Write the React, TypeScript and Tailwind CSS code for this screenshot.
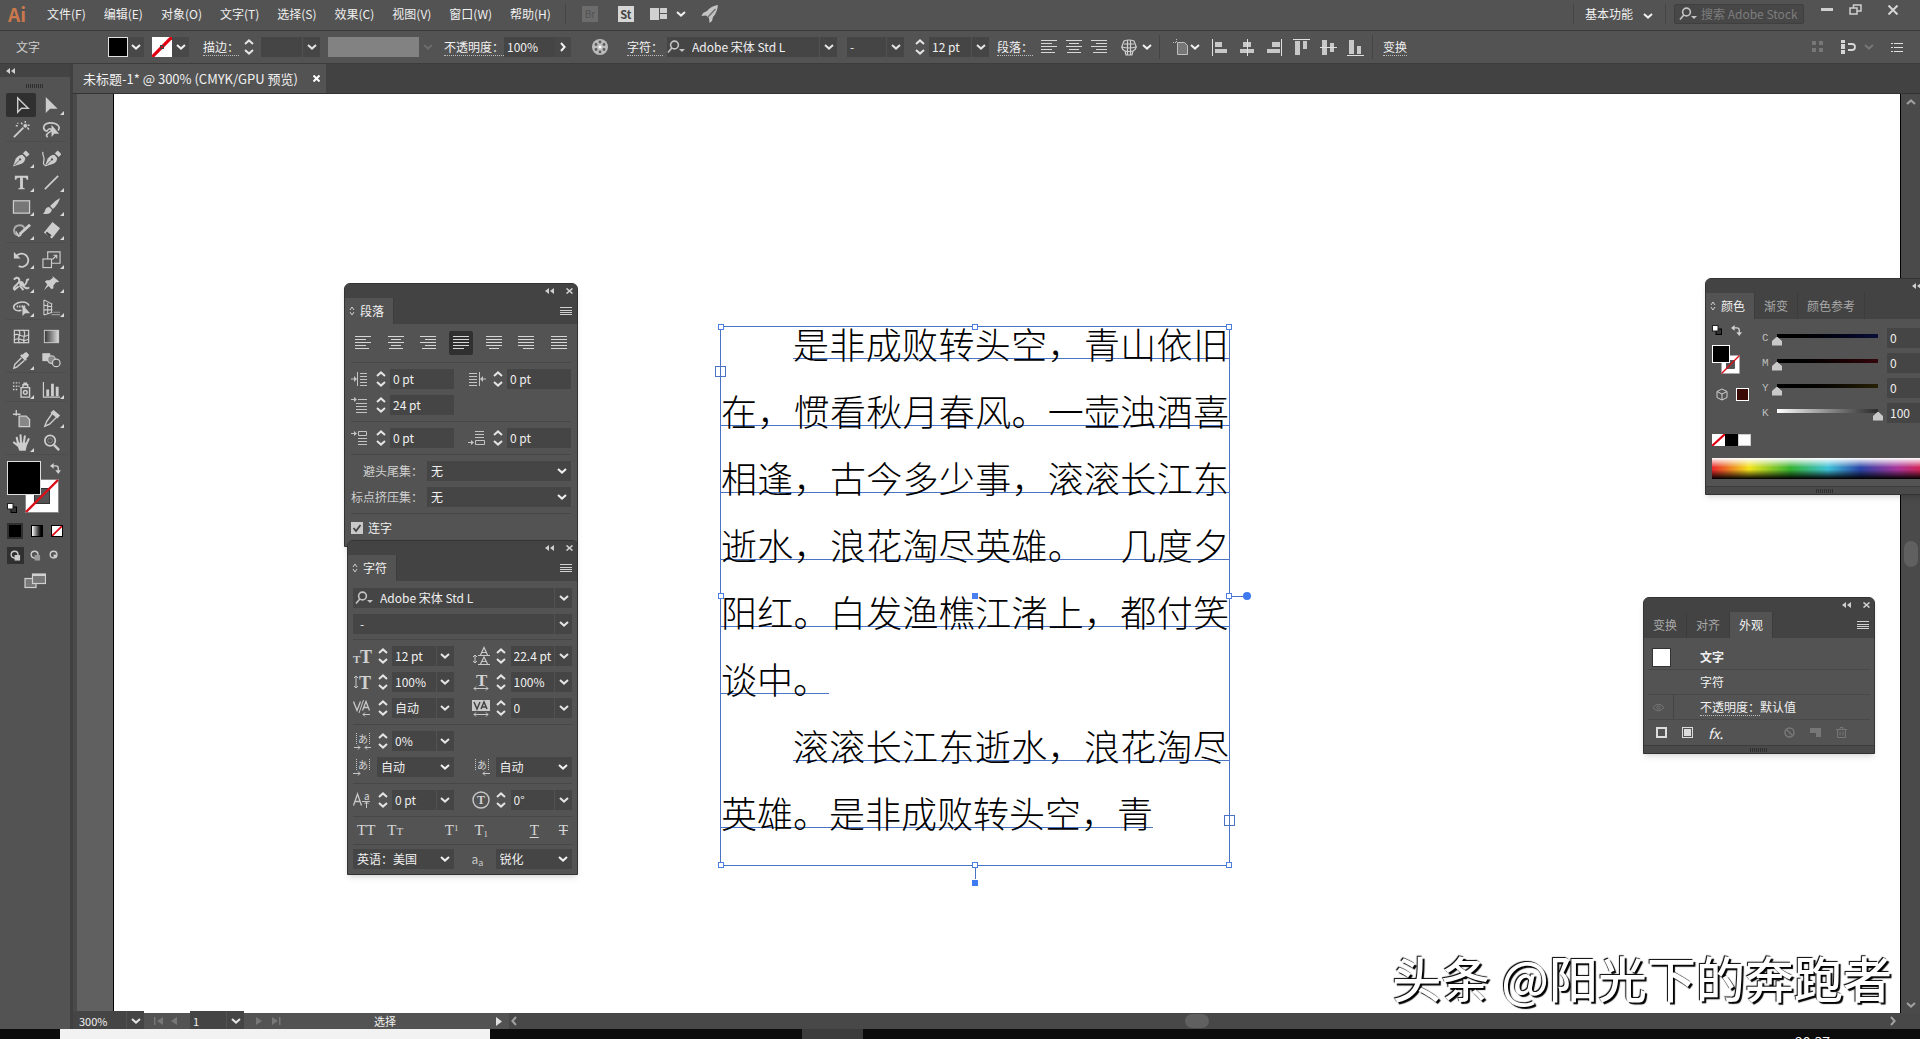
import { ReactNode, useState } from 'react';
import clsx from 'clsx';

const MENUS = ['文件(F)', '编辑(E)', '对象(O)', '文字(T)', '选择(S)', '效果(C)', '视图(V)', '窗口(W)', '帮助(H)'];

const POEM = [
  { text: '是非成败转头空，青山依旧', indent: true, full: true },
  { text: '在，惯看秋月春风。一壶浊酒喜', indent: false, full: true },
  { text: '相逢，古今多少事，滚滚长江东', indent: false, full: true },
  { text: '逝水，浪花淘尽英雄。　几度夕', indent: false, full: true },
  { text: '阳红。白发渔樵江渚上，都付笑', indent: false, full: true },
  { text: '谈中。', indent: false, full: false },
  { text: '滚滚长江东逝水，浪花淘尽', indent: true, full: true },
  { text: '英雄。是非成败转头空，青', indent: false, full: false },
];

/* ---------- small glyphs ---------- */

function Chevron({ className }: { className?: string }) {
  return (
    <svg viewBox="0 0 10 6" className={clsx('h-[6px] w-[10px] shrink-0', className)} fill="none" stroke="currentColor" strokeWidth="2">
      <path d="M1 1l4 3.6L9 1" />
    </svg>
  );
}

function Stepper({ label }: { label: string }) {
  return (
    <span className="flex w-[11px] shrink-0 flex-col items-center gap-1 text-[#e4e4e4]">
      <button aria-label={`${label} +`} className="flex">
        <Chevron className="rotate-180" />
      </button>
      <button aria-label={`${label} -`} className="flex">
        <Chevron />
      </button>
    </span>
  );
}

type LineKind = 'left' | 'center' | 'right' | 'jleft' | 'jcenter' | 'jright' | 'full';

const LINE_SETS: Record<LineKind, [number, number][]> = {
  left: [[0, 16], [0, 11], [0, 16], [0, 11], [0, 14]],
  center: [[0, 16], [3, 13], [0, 16], [3, 13], [1, 15]],
  right: [[0, 16], [5, 16], [0, 16], [5, 16], [2, 16]],
  jleft: [[0, 16], [0, 16], [0, 16], [0, 16], [0, 11]],
  jcenter: [[0, 16], [0, 16], [0, 16], [0, 16], [3, 13]],
  jright: [[0, 16], [0, 16], [0, 16], [0, 16], [5, 16]],
  full: [[0, 16], [0, 16], [0, 16], [0, 16], [0, 16]],
};

function Lines({ kind }: { kind: LineKind }) {
  return (
    <svg viewBox="0 0 16 14" className="h-[14px] w-[16px]" stroke="#d6d6d6" strokeWidth="1" shapeRendering="crispEdges">
      {LINE_SETS[kind].map(([a, b], i) => (
        <path key={i} d={`M${a} ${i * 3 + 0.5}H${b}`} />
      ))}
    </svg>
  );
}

function Search() {
  return (
    <svg viewBox="0 0 18 14" className="h-[14px] w-[18px] shrink-0" fill="none" stroke="#c4c4c4" strokeWidth="1.6">
      <circle cx="7.5" cy="5" r="3.9" />
      <path d="M4.8 8L1 12.5" />
      <path d="M12 9h6l-3 3z" fill="#c4c4c4" stroke="none" />
    </svg>
  );
}

function Swap() {
  return (
    <svg viewBox="0 0 12 12" className="h-[11px] w-[11px]" fill="none" stroke="#cfcfcf" strokeWidth="1.5">
      <path d="M3 3.2h3.5q2.5 0 2.5 2.5V9" />
      <path d="M4 0v6.4L0 3.2zM5.8 8h6.2L9 12z" fill="#cfcfcf" stroke="none" />
    </svg>
  );
}

function DefaultColors() {
  return (
    <svg viewBox="0 0 10 10" className="h-[10px] w-[10px]">
      <rect x="4" y="4" width="5.5" height="5.5" fill="#333" stroke="#000" />
      <rect x="0.5" y="0.5" width="5.5" height="5.5" fill="#fff" stroke="#222" />
    </svg>
  );
}

function NoneBox({ className }: { className?: string }) {
  return (
    <svg viewBox="0 0 12 12" preserveAspectRatio="none" className={clsx('block', className)}>
      <rect width="12" height="12" fill="#fff" />
      <path d="M0 12L12 0" stroke="#e00012" strokeWidth="2" />
    </svg>
  );
}

function StrokeBox({ className }: { className?: string }) {
  return (
    <svg viewBox="0 0 34 34" className={clsx('block', className)}>
      <rect x="0.5" y="0.5" width="33" height="33" fill="#fff" stroke="#888" />
      <rect x="9.5" y="9.5" width="15" height="15" fill="#535353" stroke="#333" />
      <path d="M1 33L33 1" stroke="#d8101c" strokeWidth="2.4" />
    </svg>
  );
}

function Grip() {
  return (
    <svg viewBox="0 0 20 4" className="h-1 w-5" stroke="#2e2e2e" shapeRendering="crispEdges">
      {[0, 1, 2, 3, 4, 5, 6, 7, 8].map((i) => (
        <path key={i} d={`M${i * 2 + 1.5} 0V4`} />
      ))}
    </svg>
  );
}

/* ---------- form parts ---------- */

function Combo({ label, value, className, arrow = true }: { label: string; value: string; className?: string; arrow?: boolean }) {
  return (
    <span className={clsx('flex h-5 items-stretch bg-[#454545]', className)}>
      <input aria-label={label} defaultValue={value} className="w-0 min-w-0 flex-1 bg-transparent pl-[3px] text-[#f0f0f0] outline-none" />
      {arrow && (
        <button aria-label={`${label} ▾`} className="flex w-[18px] items-center justify-center border-l border-[#525252] text-[#e4e4e4]">
          <Chevron />
        </button>
      )}
    </span>
  );
}

function Select({ label, id, value, className }: { label: string; id?: string; value: string; className?: string }) {
  return (
    <span className={clsx('relative flex h-5 items-center bg-[#454545] text-[#f0f0f0]', className)}>
      <select id={id} aria-label={id ? undefined : label} className="h-full w-full appearance-none bg-transparent pl-1 outline-none">
        <option>{value}</option>
      </select>
      <Chevron className="pointer-events-none absolute right-1" />
    </span>
  );
}

function DottedLabel({ children }: { children: ReactNode }) {
  return <button className="shrink-0 border-b border-dotted border-[#bdbdbd] leading-[16px] whitespace-nowrap text-[#f0f0f0]">{children}</button>;
}

/* ---------- tool column ---------- */

const I = '#cdcdcd';

function Pen({ x }: { x: number }) {
  return (
    <g transform={`translate(${x} 0)`}>
      <path d="M1 18.5L4 10q3-4 7-4l3 3.5q0 4-4 6z" fill={I} />
      <path d="M11.5 4.5l3-3L18.500 5.500 15.500 8.500z" fill={I} />
      <path d="M2.5 17l5-5" stroke="#555" />
      <circle cx="8.5" cy="11" r="1.2" fill="#555" />
    </g>
  );
}

const TOOLS: { name: string; sub?: boolean; art: ReactNode }[][] = [
  [
    { name: '选择工具', art: <path d="M6 2v15l4-4.2 7 .2z" fill="none" stroke={I} strokeWidth="1.5" /> },
    { name: '直接选择工具', sub: true, art: <path d="M4 1v17l4.5-4.500 8 0z" fill={I} /> },
    {
      name: '魔棒工具',
      art: (
        <g stroke={I} fill={I}>
          <path d="M2 18L12 8" strokeWidth="2" />
          <circle cx="14" cy="6" r="1.6" />
          <path d="M14 1v2M18.5 5.500h-2M18 10l-2-2M9.500 3l1.500 1.500M4 6h2M6 3v1" strokeWidth="1.5" />
        </g>
      ),
    },
    {
      name: '套索工具',
      art: (
        <g>
          <path d="M5 12C-1 9 2 3 9 3s11 4 8 8M5 12c3-5 7-2 4 0s-6 4-3 6" fill="none" stroke={I} strokeWidth="1.7" />
          <path d="M10 5v13l3-3.5h5z" fill={I} />
        </g>
      ),
    },
  ],
  [
    { name: '钢笔工具', sub: true, art: <Pen x={0} /> },
    {
      name: '曲率工具',
      art: (
        <g>
          <Pen x={2} />
          <path d="M1 3c-1 4 2 5 1 9s0 6 3 5" fill="none" stroke={I} strokeWidth="1.3" />
        </g>
      ),
    },
    { name: '文字工具', sub: true, art: <path d="M3 3h14v4h-1.5q-.3-2-2-2h-2v10q0 1.200 2 1.200V17h-7v-.8q2 0 2-1.200V5h-2q-1.700 0-2 2H3z" fill={I} /> },
    { name: '直线段工具', sub: true, art: <path d="M3 17L17 3" stroke={I} strokeWidth="1.8" /> },
    { name: '矩形工具', sub: true, art: <rect x="1.5" y="4" width="17" height="13" fill="#777" stroke={I} strokeWidth="1.3" /> },
    {
      name: '画笔工具',
      sub: true,
      art: <path d="M19 1q-6 3-10.500 8.500l3 3Q17 8 19 1zM7.500 10.500q-3 0-4 3-.4 3-2.500 4 8 2 9.500-4z" fill={I} />,
    },
    {
      name: 'Shaper 工具',
      sub: true,
      art: (
        <g fill="none" stroke={I}>
          <path d="M9 15c-7 1-8-5-6-8s9-4 10 1" strokeWidth="2" stroke="#aaa" />
          <path d="M8 14L19 4" strokeWidth="3" />
          <path d="M4 11l3 5 3-2" strokeWidth="1.5" />
        </g>
      ),
    },
    {
      name: '橡皮擦工具',
      sub: true,
      art: (
        <g>
          <path d="M11 1l8 6.5-8.500 11L2 12z" fill={I} />
          <path d="M5 11l5 4-2 2-4-4z" fill="#444" />
        </g>
      ),
    },
  ],
  [
    {
      name: '旋转工具',
      sub: true,
      art: (
        <g>
          <path d="M5 6a7 7 0 1 1 2 11" fill="none" stroke={I} strokeWidth="1.9" />
          <path d="M2 2v7h7z" fill={I} />
        </g>
      ),
    },
    {
      name: '比例缩放工具',
      sub: true,
      art: (
        <g fill="none" stroke={I} strokeWidth="1.2">
          <rect x="1" y="9.5" width="9" height="9" />
          <path d="M6 9.500V2h13v12h-9M11 10l4.500-4.500M12 5.500h3.500V9" />
        </g>
      ),
    },
    {
      name: '宽度工具',
      sub: true,
      art: (
        <g fill="none" stroke={I} strokeWidth="2">
          <path d="M2 6c4-5 7 0 5 3s-6 4-5 7M7 9c4-3 4 5 7 2s0-6 4-5M2 17l5-4M12 17l-4-5M10 11q5 6 8 3" />
          <circle cx="10" cy="10" r="1.5" fill={I} />
        </g>
      ),
    },
    { name: '操控变形工具', sub: true, art: <path d="M11 2l7 6-2 1-1-.5-3 3.500 0 3-2 1-3-3.500L2 17l3.500-6L3 8l2-1.500 3 .2L11.500 4z" fill={I} /> },
    {
      name: '形状生成器工具',
      sub: true,
      art: (
        <g>
          <path d="M10 13C3 15 0 10 3 7s12-5 15 1" fill="none" stroke={I} strokeWidth="1.6" />
          <path d="M5 9h9" stroke={I} strokeWidth="2" strokeDasharray="1.5 1" />
          <path d="M11 7v12l3-3 5 0z" fill={I} />
        </g>
      ),
    },
    {
      name: '透视网格工具',
      sub: true,
      art: (
        <g fill="none" stroke={I} strokeWidth="1.1">
          <path d="M2 2v16M6 4v13M10 6v9M2 2l9 4.500M2 7.500l9 2M2 12.500h9M2 18l9-3" />
          <path d="M12 15h7M10 17.500h9" stroke="#999" />
        </g>
      ),
    },
  ],
  [
    {
      name: '网格工具',
      art: (
        <g fill="none" stroke={I} strokeWidth="1.3">
          <rect x="2.5" y="3.5" width="15" height="13" />
          <path d="M2 9c5-5 8 5 16-1M2 14c6-5 9 3 15-1M7 3c4 5-3 8 1 14M12 3c4 5-2 9 1 14" />
        </g>
      ),
    },
    { name: '渐变工具', art: <rect x="2.5" y="3.5" width="15" height="13" fill="url(#toolGradient)" stroke={I} /> },
    {
      name: '吸管工具',
      sub: true,
      art: (
        <g>
          <path d="M13 2l2-1 3 3-1 2-2 2 .6 1L14 10.5 8.500 5 10 3.500l1 .5z" fill={I} />
          <path d="M10 7L3 14l-1 4 3-1 8-7" fill="none" stroke={I} strokeWidth="1.5" />
        </g>
      ),
    },
    {
      name: '混合工具',
      art: (
        <g stroke={I} strokeWidth="1.3">
          <rect x="1" y="3" width="7" height="7" fill={I} />
          <circle cx="10" cy="9" r="4" fill="#888" />
          <circle cx="15" cy="12.5" r="4" fill="#535353" />
        </g>
      ),
    },
  ],
  [
    {
      name: '符号喷枪工具',
      sub: true,
      art: (
        <g fill="none" stroke={I} strokeWidth="1.5">
          <path d="M9.500 8h9v10h-9zM11.500 8V5h5v3M12 3.500h4" />
          <circle cx="14" cy="13" r="2" />
          <path d="M1 3h7M1 6.500h7M1 10h5" strokeDasharray="1.6 1.4" />
        </g>
      ),
    },
    {
      name: '柱形图工具',
      sub: true,
      art: (
        <g>
          <path d="M1.500 2v16H19" fill="none" stroke={I} strokeWidth="1.3" />
          <path d="M4.500 10h3v7h-3zM9.500 4h3v13h-3zM14.500 7h3v10h-3z" fill={I} />
        </g>
      ),
    },
  ],
  [
    {
      name: '画板工具',
      art: (
        <g stroke={I} strokeWidth="1.4">
          <path d="M7.500 7.500H15l3.500 3.500v7.500h-11z" fill="#888" />
          <path d="M1 5.500h8M4.500 1v6" fill="none" />
        </g>
      ),
    },
    {
      name: '切片工具',
      sub: true,
      art: (
        <g fill="none" stroke={I} strokeWidth="1.5">
          <path d="M12 3l5 4L8 16l-5 2 2-5z" />
          <path d="M12 2l6 5-2 2-6-5z" fill={I} />
        </g>
      ),
    },
    {
      name: '抓手工具',
      sub: true,
      art: (
        <g stroke={I} strokeWidth="2.2" strokeLinecap="round" fill="none">
          <path d="M6.500 11L5 5M9.500 10L9 2.500M12.500 10L13.500 3.500M15 12l2.500-5.500M6 13l-4-3" />
          <path d="M6 11h9l-1.500 6.500h-5z" fill={I} />
        </g>
      ),
    },
    {
      name: '缩放工具',
      art: (
        <g fill="none" stroke={I}>
          <circle cx="8.5" cy="8" r="5.5" strokeWidth="1.8" />
          <circle cx="8.5" cy="8" r="2.5" stroke="#888" />
          <path d="M12.500 12.500L18 18" strokeWidth="2.6" />
        </g>
      ),
    },
  ],
];

function ToolColumn() {
  return (
    <aside className="flex w-[73px] shrink-0 flex-col border-r-[3px] border-[#404040] bg-[#535353]">
      <div className="flex h-[13px] shrink-0 items-center bg-[#434343] pl-[6px]">
        <Collapse />
      </div>
      <div className="flex h-4 items-center justify-center pt-px">
        <Grip />
      </div>
      <svg className="h-0 w-0" aria-hidden="true">
        <defs>
          <linearGradient id="toolGradient">
            <stop offset="0" stopColor="#333" />
            <stop offset="1" stopColor="#ddd" />
          </linearGradient>
        </defs>
      </svg>
      <div className="flex flex-col gap-1 pr-1 pl-[6px]">
        {TOOLS.map((group, g) => (
          <div key={g} className="grid grid-cols-2 border-b border-[#4c4c4c]">
            {group.map((tool, i) => (
              <button
                key={tool.name}
                aria-label={tool.name}
                className={clsx('relative flex h-6 items-center justify-center', g === 0 && i === 0 && 'rounded-xs bg-[#303030]')}
              >
                <svg viewBox="0 0 20 20" className="h-[19px] w-[19px]">
                  {tool.art}
                </svg>
                {tool.sub && (
                  <svg viewBox="0 0 4 4" className="absolute right-[2px] bottom-[2px] h-1 w-1">
                    <path d="M4 0v4H0z" fill="#d8d8d8" />
                  </svg>
                )}
              </button>
            ))}
          </div>
        ))}
      </div>
      <div className="relative mx-[7px] mt-[6px] h-[54px]">
        <button aria-label="描边" className="absolute top-[18px] left-[18px]">
          <StrokeBox className="h-[34px] w-[34px]" />
        </button>
        <button aria-label="填色" className="absolute top-0 left-0 h-[34px] w-[34px] border border-[#ddd] bg-black" />
        <button aria-label="互换填色和描边" className="absolute top-[2px] right-[2px]">
          <Swap />
        </button>
        <button aria-label="默认填色和描边" className="absolute bottom-[2px] left-0">
          <DefaultColors />
        </button>
      </div>
      <div className="mx-[7px] mt-2 flex h-4 items-center justify-between">
        <button aria-label="颜色" className="flex h-4 w-4 items-center justify-center bg-[#303030]">
          <span className="h-3 w-3 bg-black" />
        </button>
        <button aria-label="渐变" className="h-3 w-3 border border-black bg-linear-to-r from-white to-black" />
        <button aria-label="无">
          <NoneBox className="h-3 w-3 border border-black" />
        </button>
      </div>
      <div className="mx-[7px] mt-2 flex h-[17px] items-center justify-between">
        {['正常绘图', '背面绘图', '内部绘图'].map((name, i) => (
          <button key={name} aria-label={name} className={clsx('flex h-[17px] w-[17px] items-center justify-center', i === 0 && 'bg-[#303030]')}>
            <svg viewBox="0 0 12 12" className="h-[11px] w-[11px]">
              <circle cx="5" cy="5" r="3.7" fill="none" stroke={I} strokeWidth="1.5" />
              {i < 2 ? <rect x="5" y="5.5" width="6" height="6" fill={i === 0 ? I : '#9a9a9a'} /> : <path d="M5 5h3.500v3.500H5z" fill={I} />}
            </svg>
          </button>
        ))}
      </div>
      <button aria-label="更改屏幕模式" className="mt-[9px] self-center">
        <svg viewBox="0 0 22 16" className="h-4 w-[22px]" stroke="#d0d0d0" strokeWidth="1.2">
          <rect x="1" y="5.5" width="11" height="9" fill="#777" />
          <rect x="8.5" y="1" width="13" height="9.5" fill="#777" />
          <path d="M9 2h12" strokeWidth="2" />
        </svg>
      </button>
    </aside>
  );
}

/* ---------- top bars ---------- */

function Divider({ className }: { className?: string }) {
  return <span className={clsx('w-px shrink-0 bg-[#454545]', className)} />;
}

function MenuBar() {
  return (
    <header className="flex h-[31px] shrink-0 items-center border-b border-[#3c3c3c] bg-[#535353] pb-[2px] pl-2 text-[#f0f0f0]">
      <span className="w-[39px] text-[19px] leading-[20px] font-bold text-[#c9794d]">Ai</span>
      <nav className="flex gap-[18px] whitespace-nowrap">
        {MENUS.map((m) => (
          <button key={m}>{m}</button>
        ))}
      </nav>
      <Divider className="mr-4 ml-[14px] h-5" />
      <button className="mr-5 h-4 w-4 bg-[#6c6c6c] text-[10px] leading-[16px] text-[#525252]">Br</button>
      <button className="mr-4 h-4 w-4 bg-[#d6d6d6] text-[11px] leading-[16px] font-bold text-[#444]">St</button>
      <button aria-label="排列文档" className="flex items-center gap-2">
        <svg viewBox="0 0 18 12" className="h-3 w-[18px]" fill="#d0d0d0">
          <path d="M0 0h9v12H0zM10 0h7v5h-7zM10 6h7v5h-7z" />
        </svg>
        <Chevron />
      </button>
      <button aria-label="GPU 性能" className="ml-[15px]">
        <svg viewBox="0 0 18 18" className="h-[18px] w-[18px]" fill="#c4c4c4">
          <path d="M17 0Q10 1 6 6L2 8l-1.500 3 4.500-.5 3 2.500.5 5 2.500-2 1-4Q16 8 17 0z" />
          <path d="M14.500 4L7 12" stroke="#6a6a6a" strokeWidth="1.2" />
        </svg>
      </button>
      <div className="ml-auto flex items-center">
        <Divider className="mr-[11px] h-5" />
        <button className="flex items-center gap-[10px]">
          基本功能
          <Chevron className="mt-1" />
        </button>
        <Divider className="mr-2 ml-3 h-5" />
        <label className="flex h-5 w-[130px] items-center gap-1 rounded-xs border border-[#3f3f3f] bg-[#474747] pl-1">
          <Search />
          <input aria-label="搜索" placeholder="搜索 Adobe Stock" className="w-0 flex-1 bg-transparent text-[12px] outline-none placeholder:text-[#7d7d7d]" />
        </label>
        <span className="flex items-center self-start pr-[21px] pl-[17px]">
          <button aria-label="最小化" className="h-[3px] w-3 bg-[#cfcfcf]" />
          <button aria-label="还原" className="ml-4">
            <svg viewBox="0 0 13 11" className="h-[11px] w-[13px]" fill="none" stroke="#cfcfcf" strokeWidth="1.5">
              <path d="M1 4h7v6H1zM4.500 4V1H12v6H8" />
            </svg>
          </button>
          <button aria-label="关闭" className="ml-[25px]">
            <svg viewBox="0 0 12 10" className="h-[10px] w-3" stroke="#d6d6d6" strokeWidth="2">
              <path d="M1.500.5l9 9M10.500.5l-9 9" />
            </svg>
          </button>
        </span>
      </div>
    </header>
  );
}

const ALIGN_ART: { name: string; d: string; line: string }[] = [
  { name: '水平左对齐', d: 'M3 3h7v5H3zM3 10h12v4H3z', line: 'M.5 0v17' },
  { name: '水平居中对齐', d: 'M4 3h8v5H4zM1 10h14v4H1z', line: 'M8 0v17' },
  { name: '水平右对齐', d: 'M6 3h8v5H6zM1 10h13v4H1z', line: 'M15.5 0v17' },
  { name: '垂直顶对齐', d: 'M2 2h5v14H2zM10 2h4v8h-4z', line: 'M0 .5h17' },
  { name: '垂直居中对齐', d: 'M2 1h5v15H2zM10 4h4v9h-4z', line: 'M0 8.5h17' },
  { name: '垂直底对齐', d: 'M2 1h5v14H2zM10 7h4v8h-4z', line: 'M0 16.5h17' },
];

function ControlBar() {
  return (
    <div className="flex h-[33px] shrink-0 items-center border-b border-[#3c3c3c] bg-[#535353] text-[#f0f0f0]">
      <span className="w-[108px] shrink-0 pl-4 text-[#cfcfcf]">文字</span>
      <button aria-label="填色" className="h-5 w-5 shrink-0 border border-[#e0e0e0] bg-black" />
      <button aria-label="填色 ▾" className="mr-2 flex h-5 w-4 items-center justify-center bg-[#484848]">
        <Chevron />
      </button>
      <button aria-label="描边颜色" className="relative shrink-0">
        <NoneBox className="h-5 w-5" />
        <span className="absolute top-[8px] left-[8px] h-1 w-1 border border-[#444]" />
      </button>
      <button aria-label="描边颜色 ▾" className="mr-[14px] flex h-5 w-[17px] items-center justify-center bg-[#484848]">
        <Chevron />
      </button>
      <DottedLabel>描边：</DottedLabel>
      <span className="w-1" />
      <Stepper label="描边" />
      <Combo label="描边粗细" value="" className="mr-2 ml-[7px] w-[59px]" />
      <button aria-label="画笔定义" className="h-5 w-[91px] shrink-0 bg-[#828282]" />
      <Chevron className="mr-[11px] ml-1 text-[#6c6c6c]" />
      <DottedLabel>不透明度：</DottedLabel>
      <Combo label="不透明度" value="100%" arrow={false} className="w-[51px]" />
      <button aria-label="不透明度 ▾" className="mr-[20px] flex h-5 w-4 items-center justify-center bg-[#484848]">
        <Chevron className="-rotate-90" />
      </button>
      <button aria-label="重新着色图稿" className="mr-[18px]">
        <svg viewBox="0 0 18 18" className="h-[18px] w-[18px]">
          <circle cx="9" cy="9" r="8" fill="#bcbcbc" />
          <g fill="#5c5c5c">
            <circle cx="9" cy="4" r="1.4" />
            <circle cx="13" cy="6.5" r="1.4" />
            <circle cx="13" cy="11.5" r="1.4" />
            <circle cx="9" cy="14" r="1.4" />
            <circle cx="5" cy="11.5" r="1.4" />
            <circle cx="5" cy="6.5" r="1.4" />
          </g>
          <circle cx="9" cy="9" r="1.5" fill="#fff" />
        </svg>
      </button>
      <DottedLabel>字符：</DottedLabel>
      <span className="ml-1 flex h-5 w-[170px] items-center bg-[#454545]">
        <Search />
        <Combo label="字体" value="Adobe 宋体 Std L" className="ml-1 flex-1" />
      </span>
      <Combo label="字体样式" value="-" className="mx-[10px] w-[57px]" />
      <Stepper label="字号" />
      <Combo label="字号" value="12 pt" className="mr-2 ml-1 w-[60px]" />
      <DottedLabel>段落：</DottedLabel>
      <span className="ml-2 flex gap-[9px]">
        <button aria-label="左对齐">
          <Lines kind="left" />
        </button>
        <button aria-label="居中对齐">
          <Lines kind="center" />
        </button>
        <button aria-label="右对齐">
          <Lines kind="right" />
        </button>
      </span>
      <button aria-label="制作封套" className="ml-[14px] flex items-center gap-[5px]">
        <svg viewBox="0 0 16 17" className="h-[17px] w-4" fill="none" stroke="#d0d0d0" strokeWidth="1.2">
          <path d="M3 2q5-2 10 0l2.300 6q-1 3-3.300 4l-1 4H5l-1-4Q1.500 11 .7 8zM1 8q7 2 14 0M4 12q4 1 8 0M6.500 1.500v14M9.500 1.500v14M3 5h10" />
        </svg>
        <Chevron />
      </button>
      <Divider className="mr-[13px] ml-[7px] h-6" />
      <button aria-label="对齐画板" className="mr-3 flex items-center">
        <svg viewBox="0 0 17 17" className="h-[17px] w-[17px]" fill="#777" stroke="#c0c0c0">
          <path d="M4.500 3.500h7l3 3v9h-10z" />
          <path d="M0 3.500h4M3.500 0v3" strokeDasharray="1 1" />
        </svg>
        <Chevron className="h-[5px] w-[7px]" />
      </button>
      <span className="flex gap-[10px]">
        {ALIGN_ART.map((a) => (
          <button key={a.name} aria-label={a.name}>
            <svg viewBox="0 0 17 17" className="h-[17px] w-[17px]" shapeRendering="crispEdges">
              <path d={a.d} fill="#c8c8c8" />
              <path d={a.line} stroke="#e0e0e0" />
            </svg>
          </button>
        ))}
      </span>
      <Divider className="mr-[10px] ml-2 h-6" />
      <DottedLabel>变换</DottedLabel>
      <div className="mr-[17px] ml-auto flex items-center">
        <svg viewBox="0 0 12 12" className="mr-[17px] h-3 w-3" fill="#777">
          <path d="M0 0h4v4H0zM7 0h4v4H7zM0 7h4v4H0zM7 7h4v4H7z" />
        </svg>
        <button aria-label="选择类似的对象" className="mr-2 flex">
          <svg viewBox="0 0 15 14" className="h-[14px] w-[15px]" fill="#d6d6d6">
            <path d="M0 0h4v3H0zM0 4h4v5H0zM0 10h4v4H0z" />
            <path d="M7 4h4q3 0 3 3t-3 3H7" fill="none" stroke="#d6d6d6" strokeWidth="1.8" />
          </svg>
        </button>
        <Chevron className="mr-[17px] h-[5px] w-2 text-[#777]" />
        <button aria-label="控制面板菜单">
          <svg viewBox="0 0 12 10" className="h-[10px] w-3" stroke="#e0e0e0" shapeRendering="crispEdges">
            <path d="M0 1.500h2M0 5.500h2M0 9.500h2M3 1.500h9M3 5.500h9M3 9.500h9" />
          </svg>
        </button>
      </div>
    </div>
  );
}

/* ---------- floating panels ---------- */

function Collapse() {
  return (
    <svg viewBox="0 0 9 6" className="h-[6px] w-[9px]" fill="#cfcfcf">
      <path d="M4 0v6L0 3zM9 0v6L5 3z" />
    </svg>
  );
}

function Panel({ tabs, active, handle = true, className, children }: { tabs: string[]; active: number; handle?: boolean; className: string; children: ReactNode }) {
  return (
    <section className={clsx('absolute flex flex-col overflow-hidden rounded-t-md border border-[#333] bg-[#535353] text-[#f0f0f0] shadow-md', className)}>
      <div className="flex h-[14px] shrink-0 items-center justify-end gap-3 bg-[#434343] pr-1">
        <button aria-label="折叠">
          <Collapse />
        </button>
        <button aria-label="关闭">
          <svg viewBox="0 0 7 6" className="h-[6px] w-[7px]" stroke="#cfcfcf" strokeWidth="1.6">
            <path d="M.5.5l6 5M6.500.5l-6 5" />
          </svg>
        </button>
      </div>
      <div className="flex h-[26px] shrink-0 items-stretch bg-[#434343]">
        {tabs.map((t, i) => (
          <button
            key={t}
            className={clsx(
              'flex items-center gap-[5px] border-r border-[#3c3c3c]',
              i === active ? 'bg-[#535353] pr-[9px]' : 'px-[9px] text-[#a9a9a9]',
              i === active && (handle ? 'pl-1' : 'pl-[9px]'),
            )}
          >
            {i === active && handle && (
              <svg viewBox="0 0 6 10" className="h-[10px] w-[6px]" fill="none" stroke="#cfcfcf">
                <path d="M1 4l2-3 2 3M1 6l2 3 2-3" />
              </svg>
            )}
            {t}
          </button>
        ))}
        <button aria-label="面板菜单" className="mr-[5px] ml-auto self-center">
          <svg viewBox="0 0 12 8" className="h-2 w-3" stroke="#d0d0d0" shapeRendering="crispEdges">
            <path d="M0 .5h12M0 3.500h12M0 5.500h12M0 7.500h12" />
          </svg>
        </button>
      </div>
      {children}
    </section>
  );
}

function Rule({ className }: { className?: string }) {
  return <div className={clsx('h-px shrink-0 bg-[#474747]', className)} />;
}

function Mini({ children }: { children: ReactNode }) {
  return (
    <svg viewBox="0 0 18 16" className="mr-[6px] h-4 w-[18px] shrink-0" fill="none" stroke="#c4c4c4" strokeWidth="1">
      {children}
    </svg>
  );
}

function ParagraphPanel() {
  const [align, setAlign] = useState<LineKind>('jleft');
  const kinds: LineKind[] = ['left', 'center', 'right', 'jleft', 'jcenter', 'jright', 'full'];
  return (
    <Panel tabs={['段落']} active={0} className="top-[283px] left-[344px] z-10 w-[234px]">
      <div className="flex flex-col px-[6px] pb-1">
        <div className="flex items-center justify-between py-[7px]">
          {kinds.map((k) => (
            <button key={k} aria-label={k} onClick={() => setAlign(k)} className={clsx('flex h-6 w-6 items-center justify-center rounded-xs', align === k && 'bg-[#303030]')}>
              <Lines kind={k} />
            </button>
          ))}
        </div>
        <Rule />
        <div className="grid grid-cols-2 gap-x-[14px] gap-y-[6px] py-[6px]">
          <span className="flex items-center">
            <Mini>
              <path d="M0 8h4M6.500 1v14M9 2.500h7M9 5.500h7M9 8.500h7M9 11.500h7M9 14.500h7" />
              <path d="M3 5v6l3-3z" fill="#c4c4c4" stroke="none" />
            </Mini>
            <Stepper label="左缩进" />
            <Combo label="左缩进" value="0 pt" arrow={false} className="ml-1 flex-1" />
          </span>
          <span className="flex items-center">
            <Mini>
              <path d="M18 8h-4M11.500 1v14M1 2.500h8M1 5.500h8M1 8.500h8M1 11.500h8M1 14.500h8" />
              <path d="M15 5v6l-3-3z" fill="#c4c4c4" stroke="none" />
            </Mini>
            <Stepper label="右缩进" />
            <Combo label="右缩进" value="0 pt" arrow={false} className="ml-1 flex-1" />
          </span>
          <span className="flex items-center">
            <Mini>
              <path d="M0 2.500h4M7 2.500h9M5 6.500h11M5 9.500h11M5 12.500h11M5 15.500h11" />
              <path d="M3 0v5l3-2.500z" fill="#c4c4c4" stroke="none" />
            </Mini>
            <Stepper label="首行左缩进" />
            <Combo label="首行左缩进" value="24 pt" arrow={false} className="ml-1 flex-1" />
          </span>
        </div>
        <Rule />
        <div className="grid grid-cols-2 gap-x-[14px] py-[6px]">
          <span className="flex items-center">
            <Mini>
              <path d="M0 3.500h4M7.500 1.500h8v4h-8zM7 8.500h9M7 11.500h9M7 14.500h9" />
              <path d="M3 1v5l3-2.500z" fill="#c4c4c4" stroke="none" />
            </Mini>
            <Stepper label="段前间距" />
            <Combo label="段前间距" value="0 pt" arrow={false} className="ml-1 flex-1" />
          </span>
          <span className="flex items-center">
            <Mini>
              <path d="M0 12.500h4M7.500 10.500h9v4h-9zM7 1.500h9M7 4.500h9M7 7.500h9" />
              <path d="M3 10v5l3-2.500z" fill="#c4c4c4" stroke="none" />
            </Mini>
            <Stepper label="段后间距" />
            <Combo label="段后间距" value="0 pt" arrow={false} className="ml-1 flex-1" />
          </span>
        </div>
        <Rule />
        <div className="grid grid-cols-[auto_1fr] items-center gap-x-1 gap-y-[6px] py-[6px] text-[#cfcfcf]">
          <label htmlFor="kinsoku" className="text-right">避头尾集：</label>
          <Select id="kinsoku" label="避头尾集" value="无" />
          <label htmlFor="mojikumi" className="text-right">标点挤压集：</label>
          <Select id="mojikumi" label="标点挤压集" value="无" />
        </div>
        <Rule />
        <label className="relative flex h-7 items-center gap-[5px]">
          <input type="checkbox" defaultChecked className="peer h-3 w-3 appearance-none bg-[#c9c9c9]" />
          <svg viewBox="0 0 12 12" className="pointer-events-none absolute left-0 hidden h-3 w-3 peer-checked:block" fill="none" stroke="#444" strokeWidth="1.8">
            <path d="M2.500 6l2.500 3 4.500-6" />
          </svg>
          连字
        </label>
      </div>
    </Panel>
  );
}

function Field({ art, label, value, stepper = true }: { art: ReactNode; label: string; value: string; stepper?: boolean }) {
  return (
    <span className="flex items-center">
      <svg viewBox="0 0 18 18" className="mr-[6px] h-[18px] w-[18px] shrink-0 overflow-visible" fill="none" stroke="#c8c8c8">
        {art}
      </svg>
      {stepper ? (
        <>
          <Stepper label={label} />
          <Combo label={label} value={value} className="ml-1 flex-1" />
        </>
      ) : (
        <Select label={label} value={value} className="flex-1" />
      )}
    </span>
  );
}

function Letter({ x, y, size, children, sans }: { x: number; y: number; size: number; children: string; sans?: boolean }) {
  return (
    <text x={x} y={y} fontSize={size} fill="#d0d0d0" stroke="none" className={sans ? '' : 'font-[Liberation_Serif,serif] font-bold'}>
      {children}
    </text>
  );
}

function CharacterPanel() {
  const kana = (
    <>
      <Letter x={5} y={11} size={10} sans>あ</Letter>
      <path d="M3.500 1v11M16.500 1v11" strokeDasharray="1 1" />
    </>
  );
  return (
    <Panel tabs={['字符']} active={0} className="top-[540px] left-[347px] z-10 w-[231px]">
      <div className="flex flex-col px-[5px] pb-[5px]">
        <div className="flex flex-col gap-[6px] pt-[7px] pb-[5px]">
          <span className="flex h-5 items-center bg-[#454545] pl-[2px]">
            <Search />
            <Combo label="字体系列" value="Adobe 宋体 Std L" className="ml-1 flex-1" />
          </span>
          <Combo label="字体样式" value="-" className="pl-1" />
        </div>
        <Rule />
        <div className="grid grid-cols-2 gap-x-[18px] gap-y-[6px] py-[6px]">
          <Field
            label="字体大小"
            value="12 pt"
            art={
              <>
                <Letter x={0} y={16} size={11}>T</Letter>
                <Letter x={7} y={16} size={18}>T</Letter>
              </>
            }
          />
          <Field
            label="行距"
            value="22.4 pt"
            art={
              <>
                <path d="M8.500 8l3.500-7.500L15.500 8M9.800 5.500h4.400M8.500 17l3.500-7L15.500 17M9.800 14.500h4.400" strokeWidth="1.2" />
                <path d="M6 8.500h12M6 17.500h12M3 8v8M1 10l2-2 2 2M1 14l2 2 2-2" />
              </>
            }
          />
          <Field
            label="垂直缩放"
            value="100%"
            art={
              <>
                <Letter x={6} y={16} size={18}>T</Letter>
                <path d="M3 3v12M1 5l2-2 2 2M1 13l2 2 2-2" />
              </>
            }
          />
          <Field
            label="水平缩放"
            value="100%"
            art={
              <>
                <Letter x={4} y={13} size={17}>T</Letter>
                <path d="M2 15.500h14M4 13.500l-2 2 2 2M14 13.500l2 2-2 2" />
              </>
            }
          />
          <Field
            label="字距微调"
            value="自动"
            art={
              <>
                <path d="M.5 2.500l3.500 9 3.500-9M9.500 11.500l3.500-9 3.500 9M10.800 8.500h4.400" strokeWidth="1.3" />
                <path d="M10.500 1L6 14M10 15.500h7M12 13.500l-2 2 2 2" />
              </>
            }
          />
          <Field
            label="字距调整"
            value="0"
            art={
              <>
                <rect x="0" y="1" width="18" height="11" fill="#c8c8c8" stroke="none" />
                <path d="M2 3l3 7 3-7M9 10l3-7 3 7M10 8h4" stroke="#444" strokeWidth="1.5" />
                <path d="M2 15.500h14M4 13.500l-2 2 2 2M14 13.500l2 2-2 2" />
              </>
            }
          />
        </div>
        <Rule />
        <div className="grid grid-cols-2 gap-x-[18px] gap-y-[6px] py-[6px]">
          <Field label="比例间距" value="0%" art={<>{kana}<path d="M1 15.500h6M12 15.500h6M5 13.500l2 2-2 2M14 13.500l-2 2 2 2" /></>} />
          <span />
          <Field label="插入空格(左)" value="自动" stepper={false} art={<>{kana}<path d="M0 15.500h7M5 13.500l2 2-2 2" /></>} />
          <Field label="插入空格(右)" value="自动" stepper={false} art={<>{kana}<path d="M11 15.500h7M13 13.500l-2 2 2 2" /></>} />
        </div>
        <Rule />
        <div className="grid grid-cols-2 gap-x-[18px] py-[6px]">
          <Field
            label="基线偏移"
            value="0 pt"
            art={
              <>
                <path d="M.5 14.500L4.500 3l4 11.500M2 10.500h5" strokeWidth="1.3" />
                <Letter x={11} y={9} size={10} sans>a</Letter>
                <path d="M9 10.500h8M13.500 17v-6M11.500 13l2-2 2 2" />
              </>
            }
          />
          <Field
            label="字符旋转"
            value="0°"
            art={
              <>
                <circle cx="9" cy="9" r="8" strokeWidth="1.4" />
                <Letter x={5} y={13} size={12}>T</Letter>
              </>
            }
          />
        </div>
        <Rule />
        <div className="flex h-[27px] items-center justify-between px-1 pb-px font-[Liberation_Serif,serif] text-[15px] leading-[16px] text-[#d6d6d6]">
          <span className="flex gap-3">
            <button>TT</button>
            <button>T<span className="text-[11px]">T</span></button>
          </span>
          <span className="flex gap-4">
            <button>T<sup className="text-[9px]">1</sup></button>
            <button>T<sub className="text-[9px]">1</sub></button>
          </span>
          <span className="flex gap-5">
            <button className="underline underline-offset-2">T</button>
            <button className="line-through">T</button>
          </span>
        </div>
        <Rule />
        <div className="grid grid-cols-2 gap-x-[18px] pt-[4px]">
          <Select label="语言" value="英语：美国" />
          <span className="flex items-center">
            <span className="w-[24px] text-[#c8c8c8]">a<sub>a</sub></span>
            <Select label="消除锯齿" value="锐化" className="flex-1" />
          </span>
        </div>
      </div>
    </Panel>
  );
}

const INKS = [
  { name: 'C', value: 0, track: 'bg-linear-to-r from-black to-[#0a0f38]' },
  { name: 'M', value: 0, track: 'bg-linear-to-r from-black to-[#33060d]' },
  { name: 'Y', value: 0, track: 'bg-linear-to-r from-black to-[#262006]' },
  { name: 'K', value: 100, track: 'bg-linear-to-r from-white to-[#2b2b2b]' },
];

function ColorPanel() {
  return (
    <Panel tabs={['颜色', '渐变', '颜色参考']} active={0} className="top-[278px] -right-[25px] z-10 w-[240px]">
      <div className="flex gap-3 pt-[6px] pl-[6px]">
        <div className="flex w-[38px] shrink-0 flex-col">
          <div className="flex justify-between pr-2">
            <DefaultColors />
            <Swap />
          </div>
          <div className="relative mt-[9px] h-[29px]">
            <StrokeBox className="absolute top-[10px] left-[9px] h-[19px] w-[19px]" />
            <span className="absolute top-0 left-0 h-[18px] w-[18px] border border-white bg-black" />
          </div>
          <div className="mt-[14px] flex items-center gap-2 pl-1">
            <svg viewBox="0 0 12 13" className="h-[13px] w-3" fill="none" stroke="#cfcfcf">
              <path d="M6 1l5 2.500v6L6 12 1 9.500v-6zM1 3.500L6 6l5-2.500M6 6v6" />
            </svg>
            <span className="h-[13px] w-[13px] border border-white bg-[#3a0b06]" />
          </div>
        </div>
        <div className="flex flex-1 flex-col gap-[5px] pt-[3px]">
          {INKS.map((ink) => (
            <div key={ink.name} className="flex h-5 items-center">
              <label htmlFor={`ink-${ink.name}`} className="w-[10px] font-[Liberation_Mono,monospace] text-[11px] text-[#bdbdbd]">{ink.name}</label>
              <span className="relative flex h-3 w-[111px] flex-col px-[5px]">
                <span className={clsx('mt-[2px] h-1 w-full', ink.track)} />
                <input
                  id={`ink-${ink.name}`}
                  type="range"
                  defaultValue={ink.value}
                  className="absolute inset-x-0 top-1 h-[10px] w-full appearance-none bg-transparent [&::-webkit-slider-thumb]:h-[9px] [&::-webkit-slider-thumb]:w-[10px] [&::-webkit-slider-thumb]:appearance-none [&::-webkit-slider-thumb]:bg-[#c9c9c9] [&::-webkit-slider-thumb]:[clip-path:polygon(50%_0,100%_50%,100%_100%,0_100%,0_50%)]"
                />
              </span>
              <Combo label={ink.name} value={String(ink.value)} arrow={false} className="ml-1 flex-1" />
            </div>
          ))}
        </div>
      </div>
      <div className="mt-[11px] flex pl-[6px]">
        <NoneBox className="h-3 w-[13px]" />
        <span className="h-3 w-[13px] bg-black" />
        <span className="h-3 w-[13px] border border-[#ccc] bg-white" />
      </div>
      <div className="mt-3 ml-[6px] h-[21px] bg-[linear-gradient(to_bottom,#fff_0%,transparent_45%,transparent_55%,#000_100%),linear-gradient(to_right,#e8262c_0%,#f2e31c_16%,#35b233_34%,#3fc1d8_50%,#2a45a8_64%,#a9359a_80%,#e5203a_94%)]" />
      <div className="mt-[7px] flex h-2 items-center justify-center border-t border-[#3c3c3c] bg-[#4a4a4a]">
        <Grip />
      </div>
    </Panel>
  );
}

function AppearancePanel() {
  return (
    <Panel tabs={['变换', '对齐', '外观']} active={2} handle={false} className="top-[597px] right-[45px] z-10 w-[232px]">
      <div className="mx-1 mt-[7px] flex flex-col">
        {['文字', '字符', '不透明度'].map((row, i) => (
          <div key={row} className="flex h-[25px] items-center border-b border-[#484848]">
            <span className="flex w-[52px] shrink-0 pl-1">
              {i === 0 && <span className="h-[19px] w-[19px] border border-[#333] bg-white" />}
              {i === 2 && (
                <span className="flex h-6 w-[22px] items-center border-r border-[#444]">
                  <svg viewBox="0 0 13 9" className="h-[9px] w-[13px]" fill="none" stroke="#777">
                    <path d="M1 4.500q5.500-6.500 11 0q-5.500 6.500-11 0z" />
                    <circle cx="6.5" cy="4.5" r="1.5" />
                  </svg>
                </span>
              )}
            </span>
            {i === 2 ? (
              <>
                <DottedLabel>不透明度：</DottedLabel>
                <span>默认值</span>
              </>
            ) : (
              <span className={i === 0 ? 'font-bold' : ''}>{row}</span>
            )}
          </div>
        ))}
      </div>
      <div className="flex h-[25px] items-center pr-[27px] pl-3">
        <span className="mr-[15px] h-[11px] w-[11px] border-2 border-[#dcdcdc]" />
        <span className="mr-[15px] flex h-[11px] w-[11px] items-center justify-center border border-[#dcdcdc]">
          <span className="h-[7px] w-[7px] bg-[#dcdcdc]" />
        </span>
        <button className="text-[14px] leading-[16px] italic">fx.</button>
        <span className="ml-auto flex gap-[15px]">
          <svg viewBox="0 0 11 11" className="h-[11px] w-[11px]" fill="none" stroke="#777" strokeWidth="1.5">
            <circle cx="5.5" cy="5.5" r="4.5" />
            <path d="M2.500 2.500l6 6" />
          </svg>
          <svg viewBox="0 0 11 11" className="h-[11px] w-[11px]" fill="#777">
            <path d="M0 1h11v9H6V6H0z" />
          </svg>
          <svg viewBox="0 0 11 11" className="h-[11px] w-[11px]" fill="none" stroke="#777">
            <path d="M0 2.500h11M4 2V.5h3V2M1.500 3v7.500h8V3M4 4.500v4M7 4.500v4" />
          </svg>
        </span>
      </div>
      <div className="flex h-2 items-center justify-center border-t border-[#3c3c3c] bg-[#4a4a4a]">
        <Grip />
      </div>
    </Panel>
  );
}

/* ---------- text frame on the artboard ---------- */

function Handle({ className }: { className: string }) {
  return <span className={clsx('absolute h-[6px] w-[6px] border border-[#4a7fe0] bg-white', className)} />;
}

function TextFrame() {
  return (
    <div className="absolute top-[326px] left-[720px] h-[540px] w-[510px] border border-[#4a73c4] text-[36px] leading-[32px] font-light text-black [text-spacing-trim:space-all]">
      {POEM.map((line, i) => (
        <div key={i} className="flex h-[67px] items-start">
          <p
            className={clsx(
              'h-[32px] border-b border-[#4a73c4] whitespace-nowrap',
              line.indent && 'ml-[72px]',
              line.full && 'flex-1 [text-align-last:justify]',
            )}
          >
            {line.text}
          </p>
        </div>
      ))}
      {/* selection handles */}
      <Handle className="-top-[3px] -left-[3px]" />
      <Handle className="-top-[3px] left-1/2 -translate-x-1/2" />
      <Handle className="-top-[3px] -right-[3px]" />
      <Handle className="top-1/2 -left-[3px] -translate-y-1/2" />
      <Handle className="top-1/2 -right-[3px] -translate-y-1/2" />
      <Handle className="-bottom-[3px] -left-[3px]" />
      <Handle className="-right-[3px] -bottom-[3px]" />
      <Handle className="-bottom-[3px] left-1/2 -translate-x-1/2" />
      <span className="absolute top-1/2 left-1/2 h-[6px] w-[6px] -translate-1/2 bg-[#4a7ff0]" />
      {/* text thread ports */}
      <span className="absolute top-[39px] -left-[6px] h-[11px] w-[11px] border border-[#4a73c4]" />
      <span className="absolute -right-[6px] bottom-[39px] h-[11px] w-[11px] border border-[#4a73c4]" />
      <span className="absolute top-1/2 -right-[15px] h-px w-3 bg-[#4a73c4]" />
      <span className="absolute top-1/2 -right-[22px] h-2 w-2 -translate-y-1/2 rounded-full bg-[#3f7af0]" />
      <span className="absolute -bottom-[14px] left-1/2 h-[11px] w-px bg-[#4a73c4]" />
      <span className="absolute -bottom-[21px] left-1/2 h-[6px] w-[6px] -translate-x-1/2 bg-[#3f7af0]" />
    </div>
  );
}

function StatusBar() {
  return (
    <footer className="flex h-4 shrink-0 items-center bg-[#535353] text-[11px] text-[#f0f0f0]">
      <Combo label="缩放" value="300%" className="h-4 w-[71px] pl-[3px]" />
      <svg viewBox="0 0 30 8" className="mx-2 h-2 w-[30px]" fill="#777">
        <path d="M2 0h1.500v8H2zM11 0v8L5 4zM25 0v8l-6-4z" />
      </svg>
      <Combo label="画板导航" value="1" className="h-4 w-[54px]" />
      <svg viewBox="0 0 30 8" className="ml-[10px] h-2 w-[30px]" fill="#777">
        <path d="M2 0v8l6-4zM18 0v8l6-4zM25 0h1.500v8H25z" />
      </svg>
      <span className="w-[205px] pl-[90px]">选择</span>
      <svg viewBox="0 0 6 9" className="mx-[7px] h-[9px] w-[6px]" fill="#e0e0e0">
        <path d="M0 0v9l6-4.500z" />
      </svg>
      <div className="flex h-4 flex-1 items-center bg-[#484848] text-[#a0a0a0]">
        <Chevron className="h-[5px] w-2 rotate-90" />
        <span className="flex-48" />
        <span className="h-[14px] w-6 rounded-full bg-[#606060]" />
        <span className="flex-49" />
        <Chevron className="mr-[22px] h-[5px] w-2 -rotate-90" />
      </div>
    </footer>
  );
}

export default function App() {
  return (
    <div className="relative flex h-screen flex-col overflow-hidden bg-[#535353] font-['Noto_Sans_CJK_SC',sans-serif] text-[12px] leading-[16px]">
      <MenuBar />
      <ControlBar />
      <div className="flex min-h-0 flex-1">
        <ToolColumn />
        <main className="flex min-w-0 flex-1 flex-col bg-[#424242]">
          <div className="flex h-[30px] shrink-0 items-stretch border-b border-[#333]">
            <button className="flex w-[253px] items-center justify-between bg-[#535353] pr-[6px] pl-[10px] text-[13px] whitespace-nowrap text-[#f0f0f0]">
              未标题-1* @ 300% (CMYK/GPU 预览)
              <svg viewBox="0 0 7 7" className="h-[7px] w-[7px]" stroke="#fff" strokeWidth="2">
                <path d="M.5.5l6 6M6.500.5l-6 6" />
              </svg>
            </button>
          </div>
          <div className="flex min-h-0 flex-1">
            <div className="w-[41px] shrink-0 border-r border-l-4 border-r-black border-l-[#4a4a4a] bg-[#606060]" />
            <div className="flex flex-1 items-end justify-end overflow-hidden bg-white pr-2">
              <p className="text-[49px] leading-[72px] font-medium whitespace-nowrap text-white [text-shadow:2px_2px_1px_#000,-1px_-1px_1px_#000]">头条 @阳光下的奔跑者</p>
            </div>
            <div className="flex w-5 shrink-0 flex-col items-center border-l border-black bg-[#4a4a4a] py-[5px] text-[#a0a0a0]">
              <Chevron className="rotate-180" />
              <span className="flex-1" />
              <span className="h-[26px] w-[14px] rounded-full bg-[#606060]" />
              <span className="flex-1" />
              <Chevron />
            </div>
          </div>
          <StatusBar />
        </main>
      </div>
      <div className="flex h-[10px] shrink-0 bg-[#0c0c0c] pl-[60px]">
        <span className="w-[430px] bg-[#f2f2f2]" />
        <span className="ml-[312px] w-[61px] bg-[#3c3c3c]" />
        <span className="mr-[90px] ml-auto h-[10px] overflow-hidden pt-1 text-[14px] text-white">20:37</span>
      </div>
      <TextFrame />
      <ParagraphPanel />
      <CharacterPanel />
      <ColorPanel />
      <AppearancePanel />
    </div>
  );
}
